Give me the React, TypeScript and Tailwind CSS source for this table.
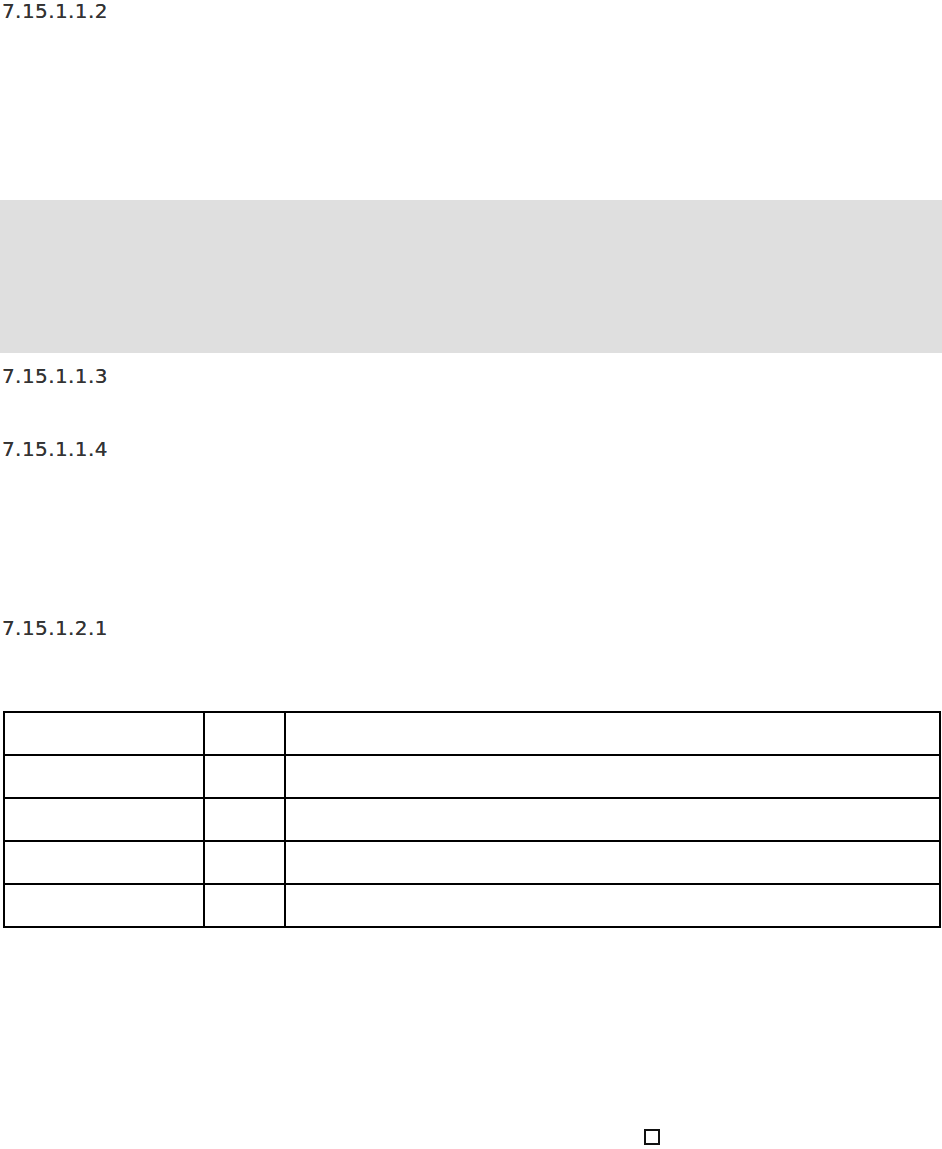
import React from 'react';

const headingCls =
  "pl-[2px] text-[20px] leading-[22px] tracking-[0.4px] text-[#333] [text-shadow:0_0_0.6px_#555] font-['DejaVu_Sans',sans-serif]";

const rows = [0, 1, 2, 3, 4];

export default function App() {
  return (
    <div className="w-[942px] min-h-[1149px] bg-white flex flex-col">
      <div className={headingCls}>7.15.1.1.2</div>

      {/* gray note band */}
      <div className="mt-[178px] h-[153px] bg-[#dfdfdf]"></div>

      <div className={`mt-[12px] ${headingCls}`}>7.15.1.1.3</div>
      <div className={`mt-[51px] ${headingCls}`}>7.15.1.1.4</div>
      <div className={`mt-[157px] ${headingCls}`}>7.15.1.2.1</div>

      <table className="mt-[72px] ml-[3px] w-[938px] border-collapse table-fixed">
        <colgroup>
          <col className="w-[200px]" />
          <col className="w-[81px]" />
          <col />
        </colgroup>
        <tbody>
          {rows.map((r) => (
            <tr key={r} className="h-[43px]">
              <td className="border-2 border-black"></td>
              <td className="border-2 border-black"></td>
              <td className="border-2 border-black"></td>
            </tr>
          ))}
        </tbody>
      </table>

      <div className="mt-[201px] ml-[644px] w-[16px] h-[16px] border-2 border-[#111]"></div>
    </div>
  );
}
